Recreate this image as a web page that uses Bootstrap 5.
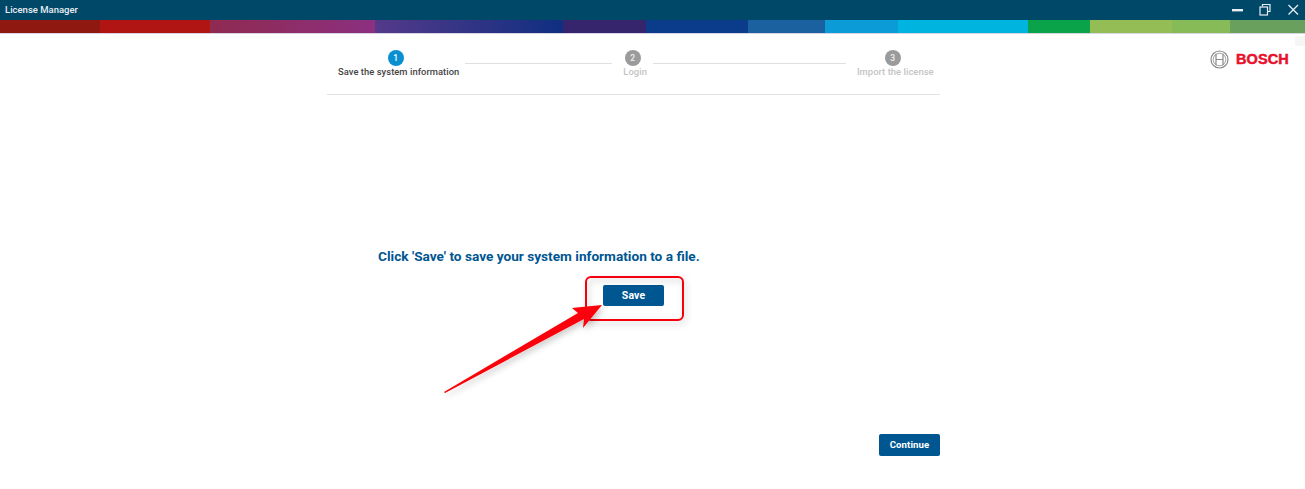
<!DOCTYPE html>
<html lang="en">
<head>
<meta charset="utf-8">
<title>License Manager</title>
<link rel="stylesheet" href="https://cdn.jsdelivr.net/npm/bootstrap@5.3.0/dist/css/bootstrap.min.css">
<style>
html,body{height:489px;overflow:hidden;background:#fff;font-family:Roboto,"Liberation Sans",sans-serif}
.titlebar{height:20px;background:#004868;color:#e8eef2;font-size:9.5px;font-weight:500;padding-left:5px}
.winicons{gap:10px;padding-right:5px}
.winclose{margin-left:3px}
.colorband{height:14px;display:flex;border-bottom:1px solid #d8d4e4}
.colorband i{display:block;height:13px}
.pagewrap{position:relative;height:455px}
.mainwrap{width:613px;margin-left:327px;height:455px}
.stepper{height:61px;border-bottom:1px solid #e2e2e2;position:relative;padding-top:16px}
.stepitem{display:flex;flex-direction:column;align-items:center;font-size:9.4px;font-weight:500;line-height:12px;color:#c4c4c4;letter-spacing:.05px;white-space:nowrap}
.stepitem.on{color:#444}
.stepdot{width:16px;height:16px;border-radius:50%;background:#9b9b9b;color:#eee;font-size:8.5px;display:flex;align-items:center;justify-content:center;line-height:1;margin-bottom:0}
.on .stepdot{background:#0a90d0;color:#fff}
.stepline{height:1px;background:#e0e0e0;margin-top:13px}
.msgtext{position:absolute;left:378px;top:213px;margin:0;font-size:13.65px;font-weight:700;line-height:18px;color:#005691;white-space:nowrap}
.bluebtn{background:#005691;color:#fff;border:0;border-radius:2px;font-size:10.5px;font-weight:700;padding:0;width:61px;height:21px;line-height:21px;letter-spacing:.1px}
.savespot{position:absolute;left:603px;top:251px}
.contspot{position:absolute;left:879px;top:400px}
.contspot.bluebtn{height:22px;line-height:22px;font-size:9.6px}
.boschlogo{position:absolute;left:1210px;top:15px;gap:7px;color:#e8112d;font-family:"Liberation Sans",sans-serif;font-weight:700;font-size:14.5px;line-height:20px;letter-spacing:.1px;-webkit-text-stroke:.5px #e8112d}
.scrollchip{position:absolute;right:0;top:2px;width:10px;height:10px;background:#f6f6f6}
.markup{position:absolute;left:0;top:0;pointer-events:none}
</style>
</head>
<body>
<div class="titlebar d-flex align-items-center justify-content-between">
  <span>License Manager</span>
  <div class="winicons d-flex align-items-center">
    <svg width="17" height="14" viewBox="0 0 17 14"><rect x="0" y="6" width="11" height="2.4" fill="#e8eef2"/></svg>
    <svg width="14" height="14" viewBox="0 0 14 14" fill="none" stroke="#e8eef2" stroke-width="1.2"><path d="M3.5 3.5V1.5H11V8.5H8.5"/><rect x="1" y="4" width="7.5" height="8"/></svg>
    <svg class="winclose" width="14" height="14" viewBox="0 0 14 14" fill="none" stroke="#e8eef2" stroke-width="1.3"><path d="M2.5 2L12 11.5M12 2L2.5 11.5"/></svg>
  </div>
</div>
<div class="colorband">
  <i style="width:100px;background:#8f1811"></i>
  <i style="width:110px;background:#b01513"></i>
  <i style="width:165px;background:linear-gradient(90deg,#8f2a50,#8c3080)"></i>
  <i style="width:188px;background:linear-gradient(90deg,#55398a,#0f2f80)"></i>
  <i style="width:83px;background:#36246c"></i>
  <i style="width:102px;background:#0b3c8c"></i>
  <i style="width:77px;background:#1c619f"></i>
  <i style="width:73px;background:#0b9bd6"></i>
  <i style="width:130px;background:#00b4e0"></i>
  <i style="width:62px;background:#0ba34a"></i>
  <i style="width:82px;background:#95bd55"></i>
  <i style="width:58px;background:#86bb58"></i>
  <i style="width:75px;background:#6aa05e"></i>
</div>
<div class="pagewrap">
  <div class="mainwrap">
    <div class="stepper d-flex">
      <div class="stepitem on" style="margin-left:11px"><span class="stepdot" style="margin-right:6px">1</span>Save the system information</div>
      <div class="stepline" style="width:147px;margin-left:6px"></div>
      <div class="stepitem" style="margin-left:11px"><span class="stepdot" style="margin-right:5px">2</span>Login</div>
      <div class="stepline" style="width:193px;margin-left:6px"></div>
      <div class="stepitem" style="margin-left:11px"><span class="stepdot" style="margin-right:5px">3</span>Import the license</div>
    </div>
  </div>
  <p class="msgtext">Click 'Save' to save your system information to a file.</p>
  <button type="button" class="btn bluebtn savespot">Save</button>
  <button type="button" class="btn bluebtn contspot">Continue</button>
  <div class="boschlogo d-flex align-items-center">
    <svg width="19" height="19" viewBox="0 0 19 19" fill="none" stroke="#8a8a8a"><circle cx="9.5" cy="9.5" r="8.5" stroke-width="1.2"/><circle cx="9.5" cy="9.5" r="6.3" stroke-width=".8"/><path d="M6 3.8V15.2M13 3.8V15.2M6 9.5H13" stroke-width="1.2"/></svg>
    <span>BOSCH</span>
  </div>
  <div class="scrollchip"></div>
</div>
<svg class="markup" width="1305" height="489" viewBox="0 0 1305 489">
  <defs><filter id="softshade" x="-20%" y="-20%" width="150%" height="150%"><feDropShadow dx="2" dy="3" stdDeviation="3" flood-color="#000" flood-opacity=".22"/></filter></defs>
  <rect x="586" y="277" width="97" height="43" rx="5" fill="none" stroke="#f5000f" stroke-width="2" filter="url(#softshade)"/>
  <path d="M444 392L578 313L572 308L602 305L583 328L584 319L445 393Z" fill="#fb0007" filter="url(#softshade)"/>
</svg>
</body>
</html>
